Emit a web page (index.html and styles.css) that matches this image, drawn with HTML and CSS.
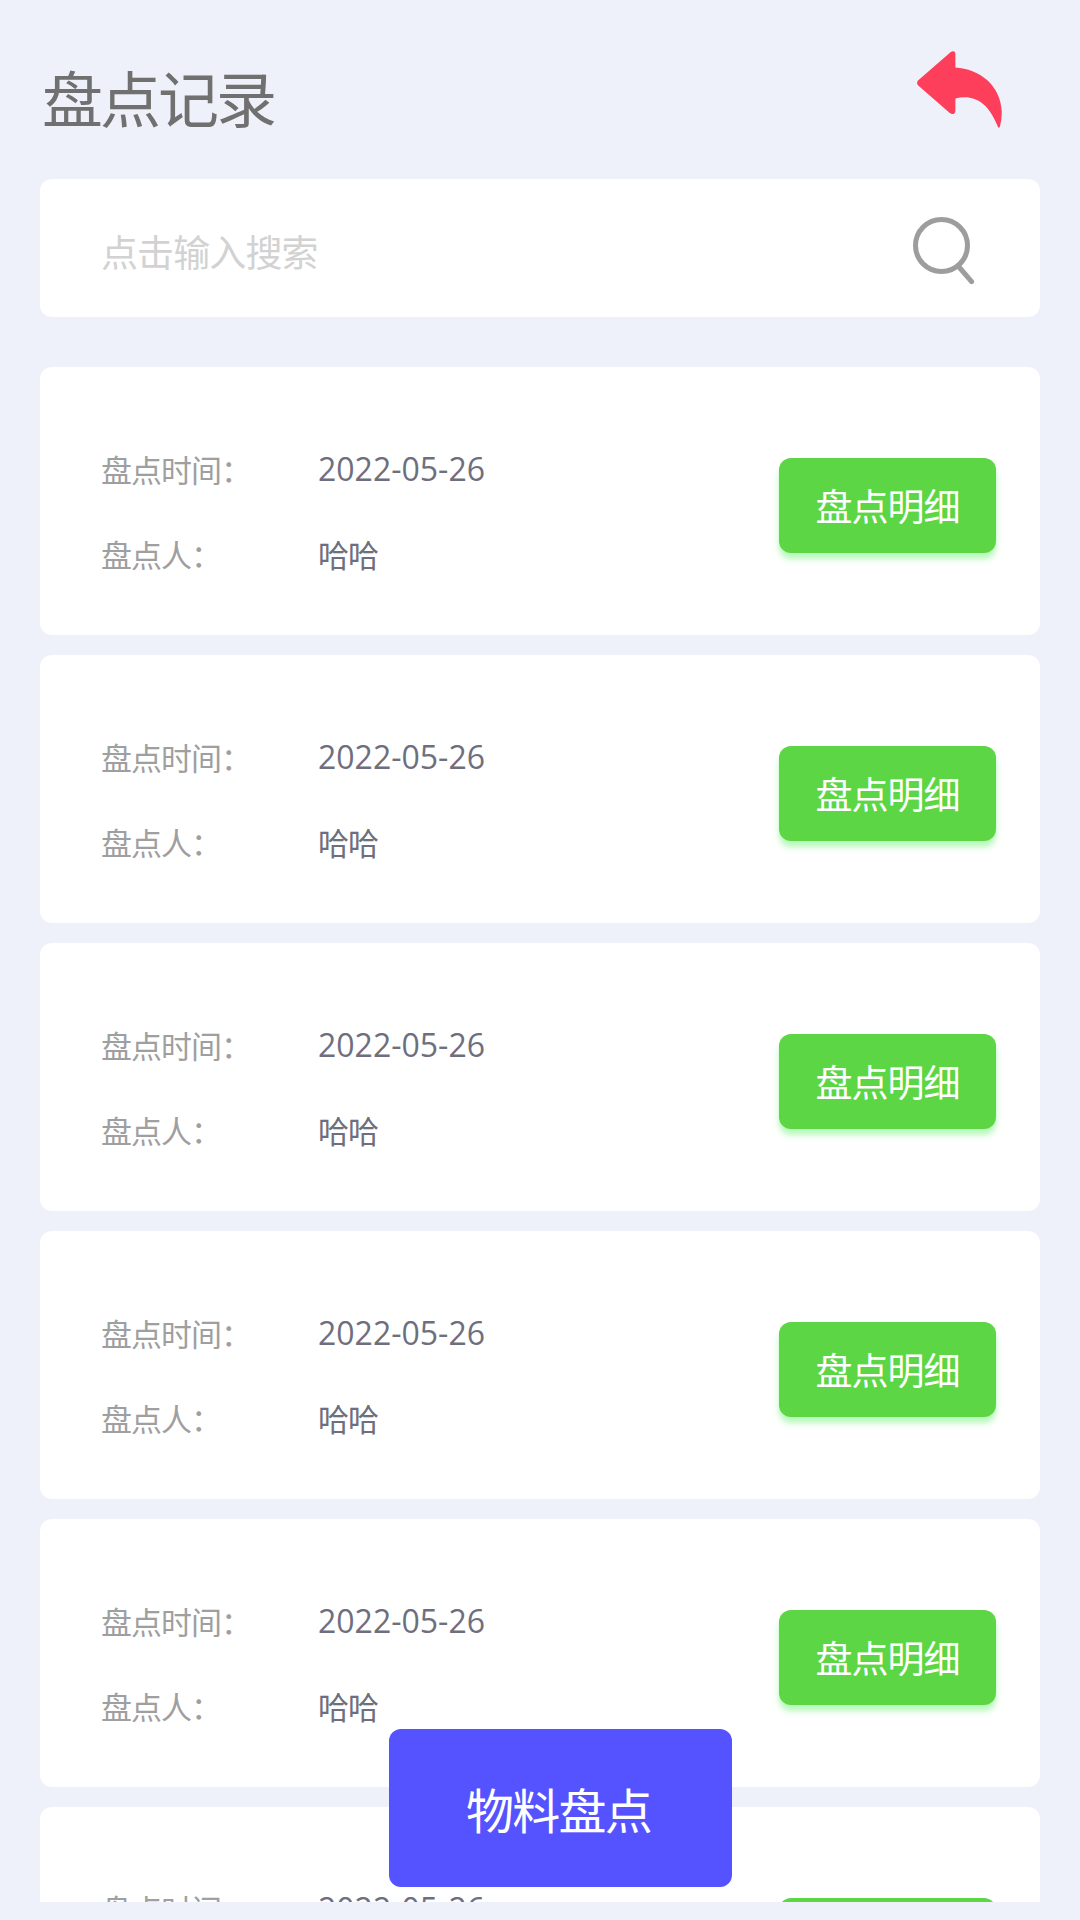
FILE: index.html
```html
<!DOCTYPE html>
<html lang="zh-CN">
<head>
    <meta charset="UTF-8">
    <meta name="viewport" content="width=device-width, initial-scale=1.0">
    <title>盘点记录</title>
    <link rel="stylesheet" href="styles.css">
</head>
<body>
    <header class="header">
        <h1>盘点记录</h1>
        <a href="#" class="back">
            <svg width="86" height="78" viewBox="0 0 86 78">
                <path fill="#fd3f5b" d="M33.8 .9 Q35.6-.3 37.3.4 Q38.4 1 38.4 3 V16.4 C62 17.5 84 34 84.8 61 Q84.8 69 82.8 76 Q81.8 77.4 81 76 C71 50 56 43 38.4 47.4 V60 Q38.3 62.3 36.7 62.9 Q34.8 63.6 32.8 62 L1.2 34.6 Q-1 32 1 29.5 Z"/>
            </svg>
        </a>
    </header>
    <div class="search">
        <input type="text" placeholder="点击输入搜索">
        <svg class="search-icon" width="62" height="68" viewBox="0 0 62 68" fill="none" stroke="#9d9d9d" stroke-width="5">
            <circle cx="28.5" cy="28.5" r="26"/>
            <path d="M46 50 L58.6 64.6" stroke-linecap="round"/>
        </svg>
    </div>
    <main class="list">
        <div class="card">
            <dl>
                <dt>盘点时间：</dt><dd class="date">2022-05-26</dd>
                <dt>盘点人：</dt><dd>哈哈</dd>
            </dl>
            <button class="detail">盘点明细</button>
        </div>
        <div class="card">
            <dl>
                <dt>盘点时间：</dt><dd class="date">2022-05-26</dd>
                <dt>盘点人：</dt><dd>哈哈</dd>
            </dl>
            <button class="detail">盘点明细</button>
        </div>
        <div class="card">
            <dl>
                <dt>盘点时间：</dt><dd class="date">2022-05-26</dd>
                <dt>盘点人：</dt><dd>哈哈</dd>
            </dl>
            <button class="detail">盘点明细</button>
        </div>
        <div class="card">
            <dl>
                <dt>盘点时间：</dt><dd class="date">2022-05-26</dd>
                <dt>盘点人：</dt><dd>哈哈</dd>
            </dl>
            <button class="detail">盘点明细</button>
        </div>
        <div class="card">
            <dl>
                <dt>盘点时间：</dt><dd class="date">2022-05-26</dd>
                <dt>盘点人：</dt><dd>哈哈</dd>
            </dl>
            <button class="detail">盘点明细</button>
        </div>
        <div class="card">
            <dl>
                <dt>盘点时间：</dt><dd class="date">2022-05-26</dd>
                <dt>盘点人：</dt><dd>哈哈</dd>
            </dl>
            <button class="detail">盘点明细</button>
        </div>
    </main>
    <button class="check">物料盘点</button>
</body>
</html>
```
FILE: styles.css
```css
* {
    box-sizing: border-box;
}
body {
    margin: 0;
    padding: 0 40px 18px;
    height: 1920px;
    display: flex;
    flex-direction: column;
    overflow: hidden;
    background-color: #eef1f9;
    font-family: "Noto Sans CJK SC", sans-serif;
}
.header {
    height: 179px;
    flex: none;
    display: flex;
    justify-content: space-between;
    padding: 51px 37px 0 2px;
}
.header h1 {
    margin: -2px 0 0;
    font-size: 61px;
    font-weight: 400;
    line-height: 96px;
    letter-spacing: -3px;
    color: #707070;
}
.back {
    height: 78px;
}
.back svg {
    display: block;
}
.search {
    height: 138px;
    flex: none;
    display: flex;
    justify-content: space-between;
    padding: 38px 65px 0 61px;
    background-color: white;
    border-radius: 12px;
}
.search input {
    width: 600px;
    height: 67px;
    padding: 0;
    border: none;
    outline: none;
    font-family: inherit;
    font-size: 37px;
    letter-spacing: -0.9px;
}
.search input::placeholder {
    color: #d2d2d2;
}
.list {
    flex: 1;
    min-height: 0;
    margin-top: 50px;
    display: flex;
    flex-direction: column;
    gap: 20px;
    overflow: hidden;
}
.card {
    height: 268px;
    flex: none;
    display: flex;
    justify-content: space-between;
    align-items: flex-start;
    padding: 60px 44px 0 61px;
    background-color: white;
    border-radius: 12px;
}
.card dl {
    margin: -1px 0 0;
    display: grid;
    grid-template-columns: 217px auto;
    grid-auto-rows: 85px;
    font-size: 31px;
    line-height: 86px;
    letter-spacing: -1px;
}
.card dt {
    color: #9f9f9f;
}
.card dd {
    margin: 0;
    color: #6e6f7e;
}
.card .date {
    font-family: "Open Sans", "Noto Sans", sans-serif;
    font-size: 32px;
    line-height: 86px;
    letter-spacing: 0;
}
.detail {
    width: 217px;
    height: 95px;
    margin-top: 31px;
    padding: 0 0 2px;
    border: none;
    border-radius: 12px;
    background-color: #5cd644;
    box-shadow: 0 6px 6px #b6f8bb;
    color: white;
    font-family: inherit;
    font-size: 37px;
    letter-spacing: -1px;
}
.check {
    position: fixed;
    left: 389px;
    bottom: 33px;
    width: 343px;
    height: 158px;
    padding: 0 4px 0 0;
    border: none;
    border-radius: 12px;
    background-color: #5553ff;
    color: white;
    font-family: inherit;
    font-size: 48px;
    letter-spacing: -1.7px;
}
```
